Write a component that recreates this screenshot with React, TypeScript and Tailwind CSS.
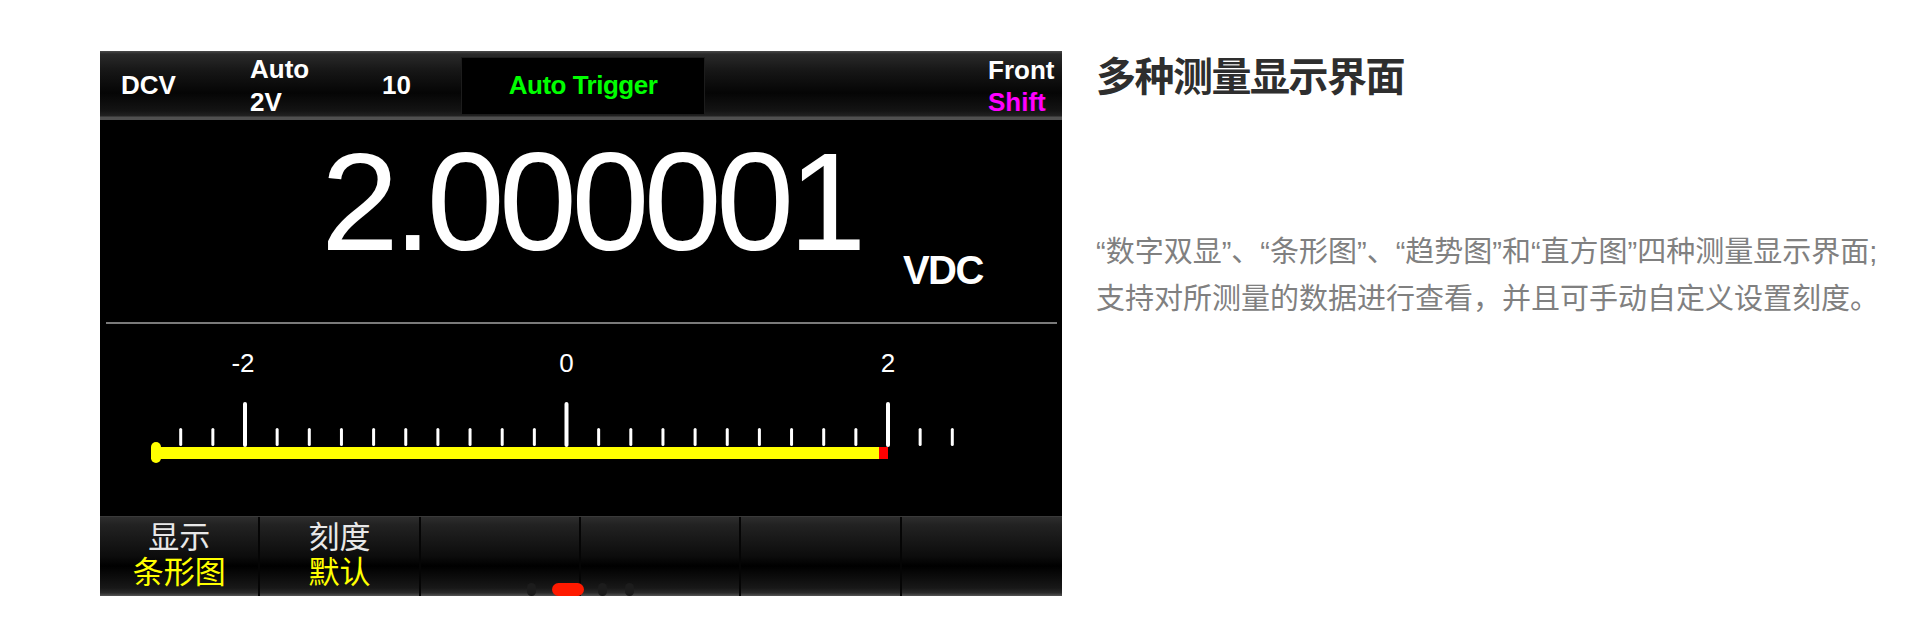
export default function App() {
  const minors: number[] = [];
  for (let i = -2; i <= 22; i++) if (i % 10 !== 0) minors.push(145 + i * 32.15);
  const majors = [145, 466.5, 788];
  const labels = [
    { x: 143, t: "-2" },
    { x: 466.5, t: "0" },
    { x: 788, t: "2" },
  ];
  const keys = [
    { a: "显示", b: "条形图" },
    { a: "刻度", b: "默认" },
    { a: "", b: "" },
    { a: "", b: "" },
    { a: "", b: "" },
    { a: "", b: "" },
  ];
  return (
    <div className="w-[1925px] h-[633px] bg-white flex items-start font-['Liberation_Sans','Noto_Sans_CJK_SC',sans-serif]">
      <div className="ml-[100px] mt-[51px] w-[962px] h-[545px] bg-black flex flex-col relative">
        {/* status bar */}
        <div className="h-[69px] flex items-center pl-[21px] text-white font-bold text-[26px] leading-[33px] bg-[linear-gradient(180deg,#4a4a4a_0px,#2a2a2a_3px,#161616_20px,#050505_42px,#141414_60px,#222_65px,#505050_66px,#505050_69px)]">
          <div className="w-[129px]">DCV</div>
          <div className="w-[132px] flex flex-col">
            <span>Auto</span>
            <span>2V</span>
          </div>
          <div className="w-[79px]">10</div>
          <div className="w-[244px] h-[58px] bg-black border border-[#1c1c1c] flex items-center justify-center text-[#00ff00] tracking-[-0.5px]">
            Auto Trigger
          </div>
          <div className="flex-1" />
          <div className="w-[74px] flex flex-col leading-[32px]">
            <span>Front</span>
            <span className="text-[#ff00ff]">Shift</span>
          </div>
        </div>

        {/* main reading */}
        <div className="flex-1 flex flex-col pt-[12px]">
          <div className="h-[190px] flex items-start text-white">
            <span className="ml-[221px] text-[140px] leading-[140px] tracking-[-5.5px] font-['Liberation_Sans',sans-serif]">
              2.000001
            </span>
            <span className="ml-[42px] mt-[118px] text-[40px] leading-[40px] font-bold tracking-[-1.5px] font-['Liberation_Sans',sans-serif]">
              VDC
            </span>
          </div>
          <div className="h-[2px] ml-[6px] mr-[5px] bg-[#7a7a7a]" />
          <svg width="962" height="192" viewBox="0 0 962 192" className="block">
            {labels.map((l) => (
              <text
                key={l.t}
                x={l.x}
                y={48}
                textAnchor="middle"
                fill="#ffffff"
                fontSize="26"
                fontFamily="Liberation Sans, sans-serif"
              >
                {l.t}
              </text>
            ))}
            {minors.map((x, i) => (
              <rect key={i} x={x - 1.5} y={104} width={3} height={18} rx={1.5} fill="#ffffff" />
            ))}
            {majors.map((x, i) => (
              <rect key={"m" + i} x={x - 2} y={78} width={4} height={45} rx={2} fill="#ffffff" />
            ))}
            <rect x={51} y={123} width={737} height={12} fill="#ffff00" />
            <rect x={51} y={118} width={10} height={21} rx={5} fill="#ffff00" />
            <rect x={779} y={123} width={9} height={12} fill="#ff0000" />
          </svg>
        </div>

        {/* softkeys */}
        <div className="h-[80px] grid grid-cols-6 border-t border-[#3a3a3a] bg-[linear-gradient(180deg,#2e2e2e_0%,#222_10%,#0c0c0c_50%,#000_62%,#181818_90%,#2a2a2a_96%,#555_100%)]">
          {keys.map((k, i) => (
            <div
              key={i}
              className={
                "flex flex-col items-center text-[31px] leading-[35px] font-['Noto_Sans_CJK_SC',sans-serif] " +
                (i < 5 ? "border-r-2 border-[#050505]" : "")
              }
            >
              <span className="text-[#e8e8e8]">{k.a}</span>
              <span className="text-[#ffff00]">{k.b}</span>
            </div>
          ))}
        </div>
        <div className="absolute left-[427px] bottom-0 w-[9px] h-[13px] rounded-full bg-[#1c1c1c]" />
        <div className="absolute left-[452px] bottom-0 w-[32px] h-[13px] rounded-full bg-[#ff1a00]" />
        <div className="absolute left-[498px] bottom-0 w-[9px] h-[13px] rounded-full bg-[#1c1c1c]" />
        <div className="absolute left-[525px] bottom-0 w-[9px] h-[13px] rounded-full bg-[#1c1c1c]" />
      </div>

      {/* description */}
      <div className="ml-[34px] flex flex-col">
        <div className="mt-[57px] text-[40px] leading-[40px] font-bold tracking-[-1.5px] text-[#2e2e2e] whitespace-nowrap">
          多种测量显示界面
        </div>
        <div className="mt-[132px] text-[29px] leading-[47px] text-[#808080] whitespace-nowrap">
          “数字双显”、“条形图”、“趋势图”和“直方图”四种测量显示界面;
          <br />
          支持对所测量的数据进行查看，并且可手动自定义设置刻度。
        </div>
      </div>
    </div>
  );
}
